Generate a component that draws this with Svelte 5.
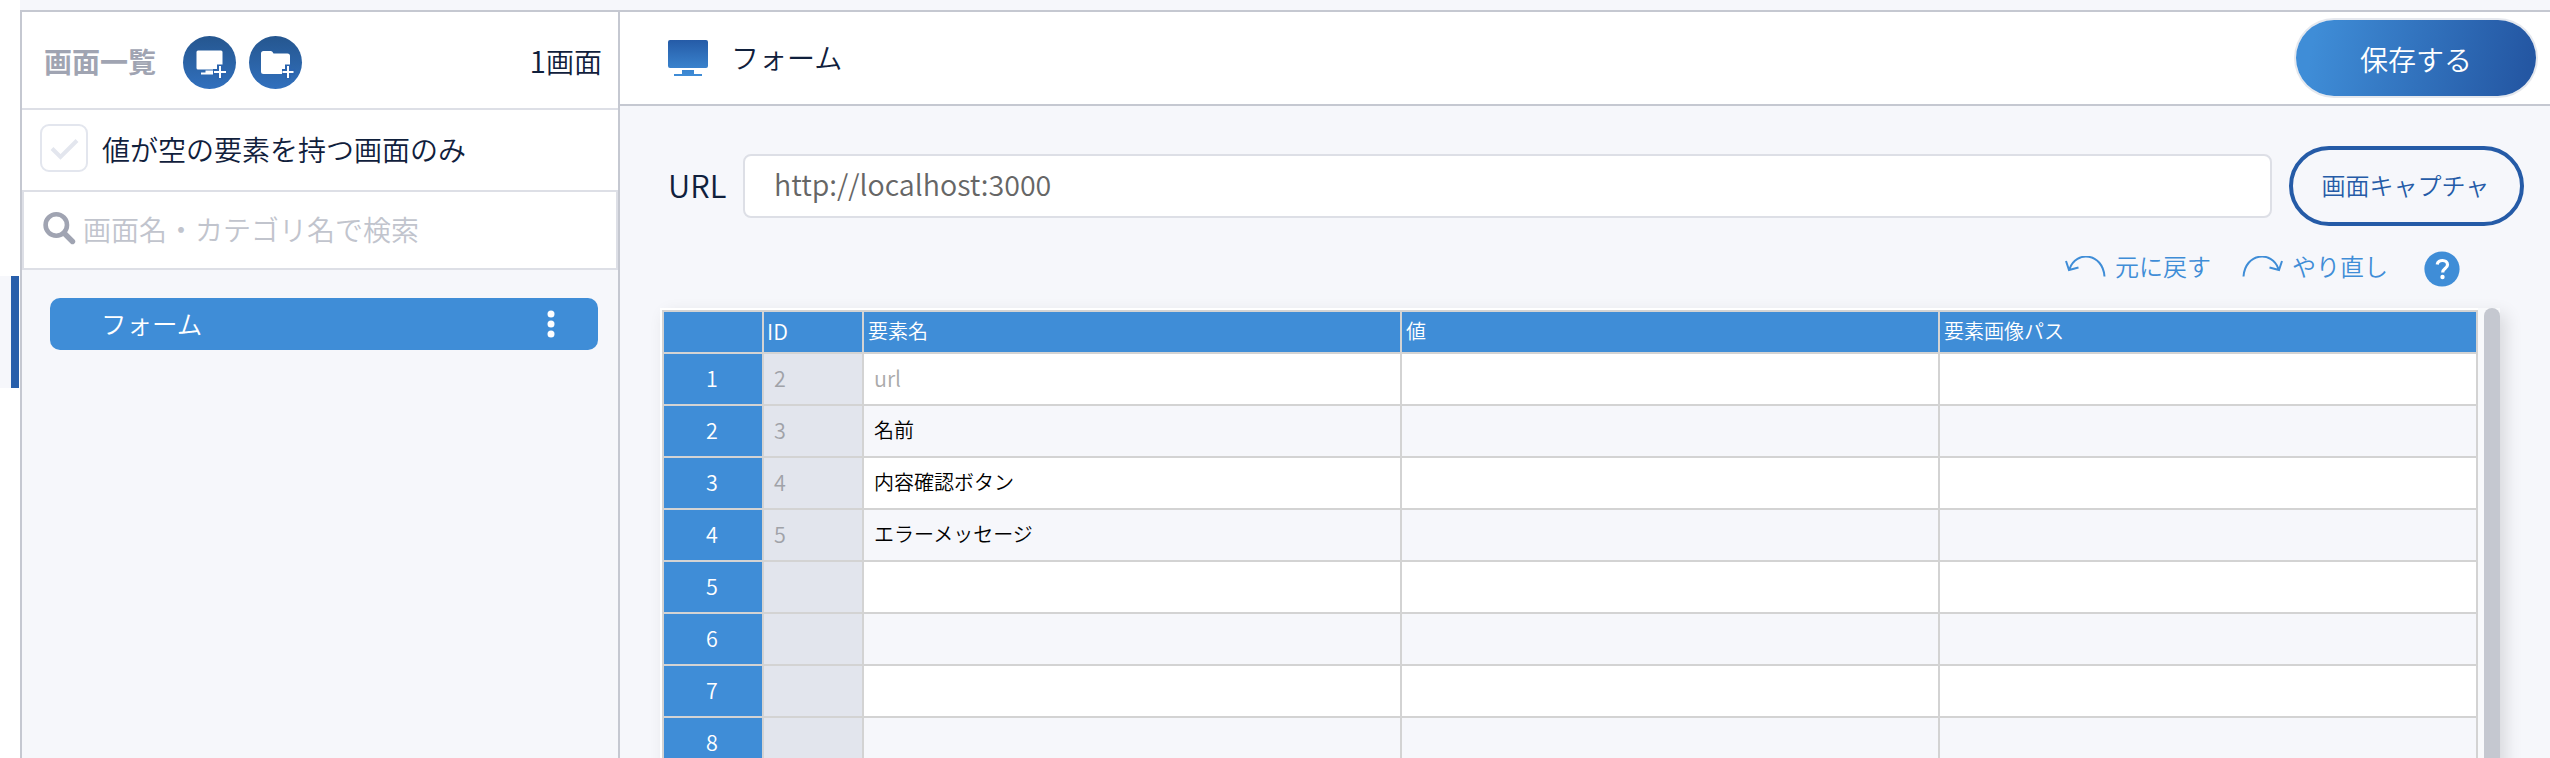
<script>
  const elements = [
    { id: '2', name: 'url', muted: true },
    { id: '3', name: '名前' },
    { id: '4', name: '内容確認ボタン' },
    { id: '5', name: 'エラーメッセージ' },
    { id: '', name: '' },
    { id: '', name: '' },
    { id: '', name: '' },
    { id: '', name: '' }
  ];
  const headers = ['', 'ID', '要素名', '値', '要素画像パス'];
</script>

<div class="app">
  <div class="rail">
    <div class="rail-top"></div>
    <div class="rail-current"></div>
  </div>

  <aside>
    <header class="side-head">
      <h2>画面一覧</h2>
      <button class="round" aria-label="画面を追加">
        <svg width="53" height="53" viewBox="0 0 53 53">
          <rect x="13.5" y="14.5" width="26" height="19" rx="1.5" fill="#fff" />
          <path d="M22.500 34.500h8v2h3v2H18v-2h4.500z" fill="#fff" />
          <path d="M37 28.500v14M30 36h13" stroke="#2b64ae" stroke-width="6" />
          <path d="M37 30v12M31 36h12" stroke="#fff" stroke-width="2" />
        </svg>
      </button>
      <button class="round" aria-label="フォルダを追加">
        <svg width="53" height="53" viewBox="0 0 53 53">
          <path d="M14.500 15h7.500q1.500 0 2.500 2.500h14q2.500 0 2.500 2.500v16q0 2-2 2H14.500q-2.500 0-2.500-2.500v-18q0-2.500 2.500-2.500z" fill="#fff" />
          <path d="M39 28.500v14M33 36h13" stroke="#2b64ae" stroke-width="6" />
          <path d="M39 30v12M33.500 36h11" stroke="#fff" stroke-width="2" />
        </svg>
      </button>
      <span class="count"><span class="digit">1</span>画面</span>
    </header>

    <div class="filter">
      <span class="check">
        <svg width="44" height="44" viewBox="0 0 44 44">
          <path d="M10 22.500l8.500 8.500L35 14.500" fill="none" stroke="#e3e6ee" stroke-width="4" />
        </svg>
      </span>
      <span>値が空の要素を持つ画面のみ</span>
    </div>

    <div class="search">
      <svg width="33" height="33" viewBox="0 0 33 33">
        <circle cx="13.300" cy="13" r="10.700" fill="none" stroke="#a0a4b2" stroke-width="4.600" />
        <path d="M21 21l8.500 8.500" stroke="#a0a4b2" stroke-width="5.400" stroke-linecap="round" />
      </svg>
      <span>画面名・カテゴリ名で検索</span>
    </div>

    <div class="item">
      <span>フォーム</span>
      <svg width="8" height="28" viewBox="0 0 8 28" fill="#fff">
        <circle cx="4" cy="4" r="3.500" /><circle cx="4" cy="14" r="3.500" /><circle cx="4" cy="24" r="3.500" />
      </svg>
    </div>
  </aside>

  <main>
    <header class="main-head">
      <svg width="40" height="36" viewBox="0 0 40 36">
        <defs>
          <linearGradient id="screen" gradientUnits="userSpaceOnUse" x1="0" y1="0" x2="0" y2="36">
            <stop offset="0" stop-color="#255ba7" /><stop offset="1" stop-color="#3f8dd7" />
          </linearGradient>
        </defs>
        <path d="M2 0h36q2 0 2 2v24q0 2-2 2H2q-2 0-2-2V2q0-2 2-2zM14 30h12v4h8v2H6v-2h8z" fill="url(#screen)" />
      </svg>
      <span class="title">フォーム</span>
      <button class="save">保存する</button>
    </header>

    <div class="url-row">
      <span class="url-label">URL</span>
      <div class="url-box"><span>http://localhost:3000</span></div>
      <button class="capture">画面キャプチャ</button>
    </div>

    <div class="tools">
      <span class="tool undo">
        <svg width="41" height="22" viewBox="0 0 41 22" fill="none" stroke="#3f8dd7" stroke-width="2">
          <path d="M39.500 20.500C38 -3 11-6 4.500 13M1 5l3 9 9.500-2.500" />
        </svg>
        <span>元に戻す</span>
      </span>
      <span class="tool redo">
        <svg width="41" height="22" viewBox="0 0 41 22" fill="none" stroke="#3f8dd7" stroke-width="2">
          <path d="M1.500 20.500C3 -3 30-6 36.500 13M40 5l-3 9-9.500-2.500" />
        </svg>
        <span>やり直し</span>
      </span>
      <span class="help">
        <svg width="36" height="36" viewBox="0 0 36 36">
          <circle cx="18" cy="18" r="17.600" fill="#3f8dd7" />
          <path d="M13.200 13.500c.8-5.500 10.300-5.200 10.300.2 0 4-4.800 3.800-4.800 7.800" fill="none" stroke="#fff" stroke-width="3.200" />
          <circle cx="18.500" cy="26" r="2.200" fill="#fff" />
        </svg>
      </span>
    </div>

    <div class="sheet">
      <div class="grid">
        {#each headers as h}
          <div class="cell th" class:latin={h === 'ID'}>{h}</div>
        {/each}
        {#each elements as el, i}
          <div class="cell num">{i + 1}</div>
          <div class="cell id">{el.id}</div>
          <div class="cell" class:even={i % 2 === 1} class:muted={el.muted}>{el.name}</div>
          <div class="cell" class:even={i % 2 === 1}></div>
          <div class="cell" class:even={i % 2 === 1}></div>
        {/each}
      </div>
      <div class="track"><div class="thumb"></div></div>
    </div>
  </main>
</div>

<style>
  :global(body) { background: #f6f7fb; overflow: hidden; }
  * { box-sizing: border-box; }
  .app {
    display: flex;
    width: 2550px;
    height: 758px;
    overflow: hidden;
    background: #f6f7fb;
    color: #10203c;
    font: 350 28px/1 "Noto Sans CJK JP", sans-serif;
    white-space: nowrap;
  }
  button { padding: 0; border: 0; font: inherit; }
  svg { display: block; flex: none; }

  .rail { width: 20px; background: #fff; }
  .rail-top { height: 276px; }
  .rail-current {
    width: 19px;
    height: 112px;
    background: #f6f7fb;
    border-right: 8px solid #285fab;
  }

  aside {
    width: 600px;
    height: 758px;
    margin-top: 10px;
    border: 2px solid #c5c8d1;
    border-bottom: 0;
  }
  .side-head {
    display: flex;
    align-items: center;
    height: 98px;
    padding: 5px 16px 0 22px;
    background: #fff;
    border-bottom: 2px solid #dddfe6;
  }
  h2 { margin: 0 27px 0 0; padding-bottom: 4px; font-size: 28px; font-weight: 700; line-height: 1; color: #a0a4b2; }
  .round {
    width: 53px;
    height: 53px;
    margin-right: 13px;
    border-radius: 50%;
    background: linear-gradient(#25568f, #3170bd);
  }
  .count { margin-left: auto; padding-bottom: 5px; }
  .digit { font-size: 30px; line-height: 28px; }
  .filter {
    display: flex;
    align-items: center;
    gap: 14px;
    height: 80px;
    padding: 0 0 4px 18px;
    background: #fff;
  }
  .filter > span:last-child { padding-top: 2px; }
  .check { width: 48px; height: 48px; border: 2px solid #e3e6ee; border-radius: 9px; }
  .search {
    display: flex;
    align-items: center;
    gap: 7px;
    height: 80px;
    padding-left: 20px;
    background: #fff;
    border: 2px solid #dddfe6;
    color: #c1c4cd;
  }
  .search svg { margin: -3px 0 0 -1px; }
  .search span { padding-bottom: 2px; }
  .item {
    display: flex;
    align-items: center;
    justify-content: space-between;
    width: 548px;
    height: 52px;
    margin: 28px 0 0 28px;
    padding: 0 43px 0 51px;
    border-radius: 10px;
    background: #3f8dd7;
    color: #fff;
    font-size: 25.5px;
  }
  .item span { padding-bottom: 3px; }

  main { flex: 1; min-width: 0; margin-top: 10px; }
  .main-head {
    display: flex;
    align-items: center;
    height: 96px;
    padding: 0 14px 0 48px;
    background: #fff;
    border: solid #c5c8d1;
    border-width: 2px 0;
  }
  .title { margin-left: 23px; padding-bottom: 2px; }
  .save {
    width: 240px;
    height: 76px;
    margin-left: auto;
    border-radius: 38px;
    background: linear-gradient(100deg, #3f8dd7 8%, #2457a3 95%);
    box-shadow: 0 0 0 2px #e5e8ee;
    color: #fff;
    padding-top: 2px;
  }
  .url-row {
    display: flex;
    align-items: center;
    height: 80px;
    margin: 40px 26px 0 48px;
  }
  .url-label { width: 75px; padding-bottom: 3px; font-size: 31px; }
  .url-box {
    display: flex;
    align-items: center;
    flex: 1;
    height: 64px;
    margin-right: 17px;
    padding: 0 0 3px 29px;
    border: 2px solid #dddfe6;
    border-radius: 8px;
    background: #fff;
    color: #666;
    font-size: 28.6px;
  }
  .capture {
    width: 235px;
    height: 80px;
    padding: 0 2px 2px 0;
    border: 4px solid #255ba7;
    border-radius: 40px;
    background: transparent;
    color: #255ba7;
    font-size: 24px;
  }
  .tools {
    display: flex;
    align-items: center;
    justify-content: flex-end;
    height: 82px;
    padding-right: 90px;
    color: #3f8dd7;
    font-size: 24px;
  }
  .tool { display: flex; align-items: center; gap: 9px; }
  .tool span { padding-bottom: 3px; }
  .redo { margin: 0 36px 0 31px; }
  .help { padding-top: 3px; }

  .sheet {
    display: flex;
    width: 1840px;
    height: 600px;
    margin-left: 40px;
    padding: 2px 0 0 2px;
    background: linear-gradient(90deg, #fff 1818px, #f8f9fb 1818px);
    box-shadow: 6px 6px 16px rgba(0, 0, 0, 0.12);
  }
  .grid {
    display: grid;
    grid-template-columns: 98px 98px 536px 536px 536px;
    grid-template-rows: 40px;
    grid-auto-rows: 50px;
    gap: 2px;
    align-self: flex-start;
    padding: 2px;
    background: #d3d3d3;
    color: #000;
    font-size: 20px;
  }
  .cell { display: flex; align-items: center; padding: 0 0 2px 10px; background: #fff; }
  .even { background: #f6f7fb; }
  .muted { color: #aaa; font-size: 21.5px; }
  .th { padding-left: 4px; background: #3f8dd7; color: #fff; }
  .latin { padding-left: 3px; font-size: 21.5px; }
  .num { justify-content: center; padding: 0 2px 2px 0; background: #3f8dd7; color: #fff; font-size: 21.5px; }
  .id { background: #e2e5ed; color: #a0a2a8; font-size: 21.5px; }
  .track { margin: -2px 0 0 6px; }
  .thumb { width: 16px; height: 600px; border-radius: 8px; background: #c5c8d0; }
</style>
